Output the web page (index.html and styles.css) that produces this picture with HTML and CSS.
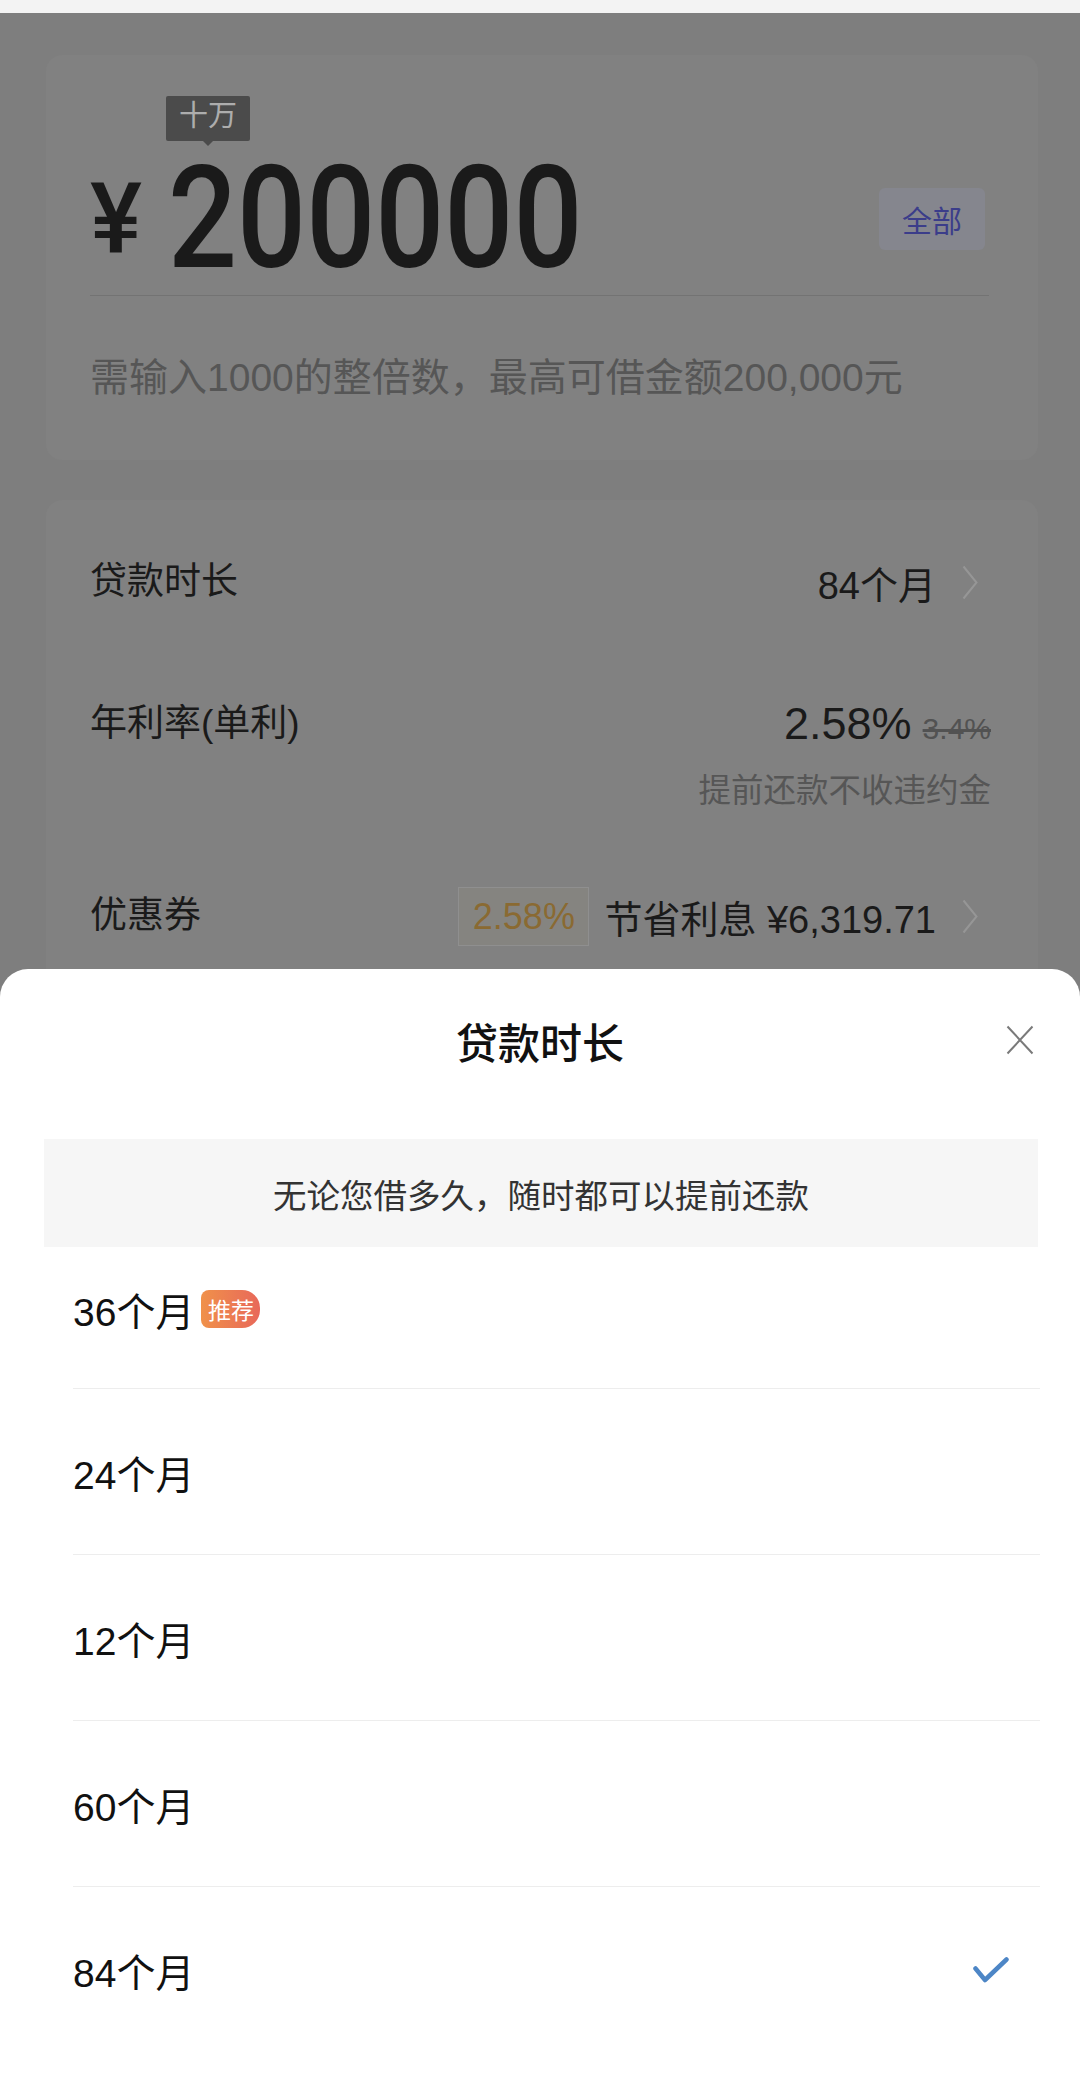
FILE: index.html
```html
<!DOCTYPE html>
<html lang="zh-CN">
<head>
<meta charset="utf-8">
<title>贷款时长</title>
<link rel="stylesheet" href="styles.css">
</head>
<body>
<div class="statusbar"></div>
<main class="page">
  <section class="card amount-card">
    <div class="amount-row">
      <span class="unit-tip">十万</span>
      <span class="currency">¥</span>
      <span class="amount">200000</span>
      <button class="all-btn">全部</button>
    </div>
    <div class="divider"></div>
    <p class="hint">需输入1000的整倍数，最高可借金额200,000元</p>
  </section>

  <section class="card info-card">
    <div class="info-row row-term">
      <span class="label">贷款时长</span>
      <span class="value">84个月</span>
      <svg class="chev" viewBox="0 0 16 35"><polyline points="1.5,1.5 14.5,17.5 1.5,33.5" fill="none" stroke="#969696" stroke-width="2"/></svg>
    </div>
    <div class="info-row row-rate">
      <span class="label">年利率(单利)</span>
      <div class="rate-block">
        <div class="rate-line"><span class="rate">2.58%</span><span class="rate-old">3.4%</span></div>
        <div class="rate-note">提前还款不收违约金</div>
      </div>
    </div>
    <div class="info-row row-coupon">
      <span class="label">优惠券</span>
      <span class="coupon-tag">2.58%</span>
      <span class="value">节省利息 ¥6,319.71</span>
      <svg class="chev" viewBox="0 0 16 35"><polyline points="1.5,1.5 14.5,17.5 1.5,33.5" fill="none" stroke="#969696" stroke-width="2"/></svg>
    </div>
  </section>
</main>

<div class="sheet">
  <div class="sheet-head">
    <h2 class="sheet-title">贷款时长</h2>
    <svg class="close" viewBox="0 0 28 30"><path d="M1.5 1.5 L26.5 28.5 M26.5 1.5 L1.5 28.5" stroke="#7a7a7a" stroke-width="2" fill="none"/></svg>
  </div>
  <div class="notice">无论您借多久，随时都可以提前还款</div>
  <ul class="options">
    <li class="option">36个月<span class="tag">推荐</span></li>
    <li class="option">24个月</li>
    <li class="option">12个月</li>
    <li class="option">60个月</li>
    <li class="option">84个月<svg class="check" viewBox="0 0 36 26"><path d="M2.5 11.5 L12 23 L33.5 2.5" fill="none" stroke="#4d86c6" stroke-width="4.5" stroke-linecap="round" stroke-linejoin="round"/></svg></li>
  </ul>
</div>
</body>
</html>
```

FILE: styles.css
```css
html, body {
  margin: 0;
  padding: 0;
}
body {
  width: 1080px;
  height: 2074px;
  overflow: hidden;
  position: relative;
  background: #7e7e7e;
  font-family: "Liberation Sans", "Noto Sans CJK SC", sans-serif;
}
.statusbar {
  height: 13px;
  background: #f3f3f3;
}
.page {
  padding: 42px 42px 0 46px;
}
.card {
  background: #818181;
  border-radius: 16px;
}
.amount-card {
  height: 405px;
  box-sizing: border-box;
  padding: 92px 49px 0 44px;
}
.amount-row {
  position: relative;
  display: flex;
  align-items: center;
  height: 143px;
}
.unit-tip {
  position: absolute;
  left: 76px;
  top: -51px;
  width: 84px;
  height: 45px;
  box-sizing: border-box;
  padding-bottom: 10px;
  background: #4b4b4b;
  color: #adadad;
  font-family: "Noto Sans CJK SC", sans-serif;
  font-size: 29px;
  line-height: 35px;
  text-align: center;
  border-radius: 2px;
}
.unit-tip::after {
  content: "";
  position: absolute;
  left: 37px;
  bottom: -5px;
  border-left: 5px solid transparent;
  border-right: 5px solid transparent;
  border-top: 5px solid #4b4b4b;
}
.currency {
  font-family: Roboto, sans-serif;
  font-size: 98px;
  font-weight: 500;
  line-height: 1;
  color: #1a1a1a;
}
.amount {
  display: inline-block;
  font-family: Roboto, sans-serif;
  font-size: 143px;
  font-weight: 500;
  line-height: 1;
  color: #1a1a1a;
  margin-left: 26px;
  transform: scaleX(0.85);
  transform-origin: left center;
}
.all-btn {
  margin-left: auto;
  margin-right: 4px;
  width: 106px;
  height: 62px;
  padding: 0;
  border: 0;
  border-radius: 6px;
  background: #85868e;
  color: #3b3d8a;
  font-family: "Noto Sans CJK SC", sans-serif;
  font-size: 30px;
}
.divider {
  height: 1px;
  background: #737373;
  margin-top: 5px;
}
.hint {
  margin: 54px 0 0;
  font-size: 39px;
  line-height: 55px;
  color: #565656;
  white-space: nowrap;
}
.info-card {
  margin-top: 40px;
  height: 700px;
  box-sizing: border-box;
  padding: 0 47px 0 44px;
}
.info-row {
  display: flex;
  align-items: center;
}
.row-term {
  height: 164px;
}
.row-rate {
  height: 192px;
  box-sizing: border-box;
  align-items: flex-start;
  padding-top: 30px;
}
.row-coupon {
  height: 120px;
}
.label {
  font-size: 37px;
  line-height: 60px;
  color: #1a1a1a;
}
.value {
  margin-left: auto;
  font-size: 38px;
  color: #1a1a1a;
  white-space: nowrap;
}
.chev {
  width: 16px;
  height: 35px;
  margin-left: 26px;
  margin-right: 13px;
}
.rate-block {
  margin-left: auto;
  text-align: right;
}
.rate-line {
  display: flex;
  align-items: baseline;
  justify-content: flex-end;
  line-height: 60px;
}
.rate {
  font-size: 45px;
  color: #1a1a1a;
}
.rate-old {
  font-size: 30px;
  color: #525252;
  text-decoration: line-through;
  margin-left: 11px;
}
.rate-note {
  font-size: 32.5px;
  line-height: 44px;
  margin-top: 10px;
  color: #565656;
}
.coupon-tag {
  margin-left: auto;
  margin-right: 15px;
  width: 131px;
  height: 59px;
  box-sizing: border-box;
  border: 1px solid #8f8f8f;
  background: #858480;
  color: #8a6a32;
  font-size: 36px;
  line-height: 57px;
  text-align: center;
}
.row-coupon .value {
  margin-left: 0;
}
.sheet {
  position: absolute;
  left: 0;
  right: 0;
  top: 969px;
  bottom: 0;
  background: #fff;
  border-radius: 28px 28px 0 0;
}
.sheet-head {
  position: relative;
  height: 142px;
  display: flex;
  align-items: center;
  justify-content: center;
}
.sheet-title {
  margin: 0;
  font-family: "Noto Sans CJK SC", sans-serif;
  font-size: 42px;
  font-weight: 500;
  color: #111;
}
.close {
  position: absolute;
  right: 46px;
  top: 56px;
  width: 28px;
  height: 30px;
}
.notice {
  margin: 28px 42px 0 44px;
  height: 108px;
  background: #f6f6f6;
  display: flex;
  align-items: center;
  justify-content: center;
  font-family: "Noto Sans CJK SC", sans-serif;
  font-size: 33.5px;
  color: #333;
}
.options {
  list-style: none;
  margin: 0 40px 0 73px;
  padding: 0;
}
.option {
  height: 166px;
  box-sizing: border-box;
  border-bottom: 1px solid #ededed;
  display: flex;
  align-items: center;
  font-size: 39px;
  color: #111;
}
.option:first-child {
  height: 142px;
  padding-bottom: 17px;
}
.option:last-child {
  border-bottom: 0;
}
.tag {
  margin-left: 7px;
  width: 59px;
  height: 38px;
  border-radius: 8px 18px 18px 8px;
  background: linear-gradient(90deg, #f0914a, #e8685a);
  color: #fff;
  font-family: "Noto Sans CJK SC", sans-serif;
  font-size: 23px;
  display: flex;
  align-items: center;
  justify-content: center;
}
.check {
  margin-left: auto;
  margin-right: 31px;
  width: 36px;
  height: 26px;
}
```
